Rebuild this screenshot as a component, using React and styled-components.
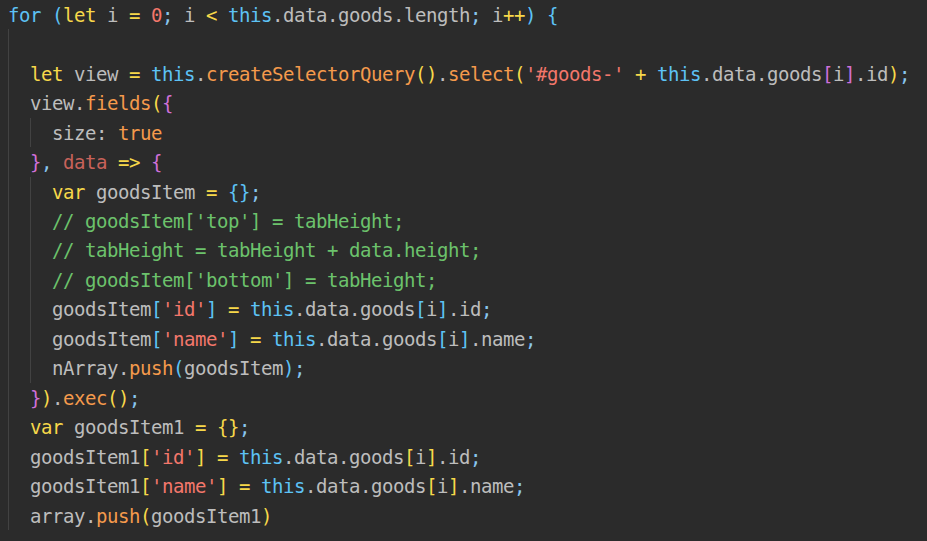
import React from 'react';
import styled, { createGlobalStyle } from 'styled-components';

const GlobalStyle = createGlobalStyle`
  html, body {
    margin: 0;
    padding: 0;
    background: #2b2b2b;
  }
`;

const colors = {
  t: '#bdbdbd',
  k: '#5dc2f5',
  y: '#f7d84a',
  o: '#f59a4c',
  s: '#f3776b',
  c: '#6cc26c',
  a: '#c8625a',
  p: '#d070d8',
  b: '#5dc2f5',
  x: '#88c6ee',
};

const Editor = styled.div`
  width: 927px;
  height: 541px;
  overflow: hidden;
  background: #2b2b2b;
  padding: 0 0 0 8px;
  box-sizing: border-box;
  font-family: "DejaVu Sans Mono", "Liberation Mono", monospace;
  font-size: 19px;
  letter-spacing: -0.44px;
  color: #bdbdbd;
`;

const Line = styled.div`
  display: flex;
  height: 29.47px;
  align-items: center;
  white-space: pre;
`;

const Guide = styled.span`
  flex: none;
  width: 22px;
  align-self: stretch;
  box-shadow: inset 1px 0 0 #424242;
`;

const Token = styled.span`
  color: ${(p) => colors[p.$c]};
`;

const code = [
  [0, [['k', 'for'], ['t', ' '], ['b', '('], ['y', 'let'], ['t', ' i '], ['y', '='], ['t', ' '], ['s', '0'], ['x', ';'], ['t', ' i '], ['y', '<'], ['t', ' '], ['k', 'this'], ['t', '.data.goods.length'], ['x', ';'], ['t', ' i'], ['y', '++'], ['b', ')'], ['t', ' '], ['b', '{']]],
  [1, []],
  [1, [['y', 'let'], ['t', ' view '], ['y', '='], ['t', ' '], ['k', 'this'], ['t', '.'], ['o', 'createSelectorQuery'], ['y', '()'], ['t', '.'], ['o', 'select'], ['y', '('], ['s', "'#goods-'"], ['t', ' '], ['y', '+'], ['t', ' '], ['k', 'this'], ['t', '.data.goods'], ['p', '['], ['t', 'i'], ['p', ']'], ['t', '.id'], ['y', ')'], ['x', ';']]],
  [1, [['t', 'view.'], ['o', 'fields'], ['y', '('], ['p', '{']]],
  [2, [['t', 'size: '], ['o', 'true']]],
  [1, [['p', '}'], ['x', ','], ['t', ' '], ['a', 'data'], ['t', ' '], ['y', '=>'], ['t', ' '], ['p', '{']]],
  [2, [['y', 'var'], ['t', ' goodsItem '], ['y', '='], ['t', ' '], ['b', '{}'], ['x', ';']]],
  [2, [['c', "// goodsItem['top'] = tabHeight;"]]],
  [2, [['c', '// tabHeight = tabHeight + data.height;']]],
  [2, [['c', "// goodsItem['bottom'] = tabHeight;"]]],
  [2, [['t', 'goodsItem'], ['b', '['], ['s', "'id'"], ['b', ']'], ['t', ' '], ['y', '='], ['t', ' '], ['k', 'this'], ['t', '.data.goods'], ['b', '['], ['t', 'i'], ['b', ']'], ['t', '.id'], ['x', ';']]],
  [2, [['t', 'goodsItem'], ['b', '['], ['s', "'name'"], ['b', ']'], ['t', ' '], ['y', '='], ['t', ' '], ['k', 'this'], ['t', '.data.goods'], ['b', '['], ['t', 'i'], ['b', ']'], ['t', '.name'], ['x', ';']]],
  [2, [['t', 'nArray.'], ['o', 'push'], ['b', '('], ['t', 'goodsItem'], ['b', ')'], ['x', ';']]],
  [1, [['p', '}'], ['y', ')'], ['t', '.'], ['o', 'exec'], ['y', '()'], ['x', ';']]],
  [1, [['y', 'var'], ['t', ' goodsItem1 '], ['y', '='], ['t', ' '], ['y', '{}'], ['x', ';']]],
  [1, [['t', 'goodsItem1'], ['y', '['], ['s', "'id'"], ['y', ']'], ['t', ' '], ['y', '='], ['t', ' '], ['k', 'this'], ['t', '.data.goods'], ['y', '['], ['t', 'i'], ['y', ']'], ['t', '.id'], ['x', ';']]],
  [1, [['t', 'goodsItem1'], ['y', '['], ['s', "'name'"], ['y', ']'], ['t', ' '], ['y', '='], ['t', ' '], ['k', 'this'], ['t', '.data.goods'], ['y', '['], ['t', 'i'], ['y', ']'], ['t', '.name'], ['x', ';']]],
  [1, [['t', 'array.'], ['o', 'push'], ['y', '('], ['t', 'goodsItem1'], ['y', ')']]],
];

export default function App() {
  return (
    <>
      <GlobalStyle />
      <Editor>
        {code.map(([indent, tokens], i) => (
          <Line key={i}>
            {Array.from({ length: indent }).map((_, g) => (
              <Guide key={g} />
            ))}
            {tokens.map(([c, text], j) => (
              <Token key={j} $c={c}>
                {text}
              </Token>
            ))}
          </Line>
        ))}
      </Editor>
    </>
  );
}
